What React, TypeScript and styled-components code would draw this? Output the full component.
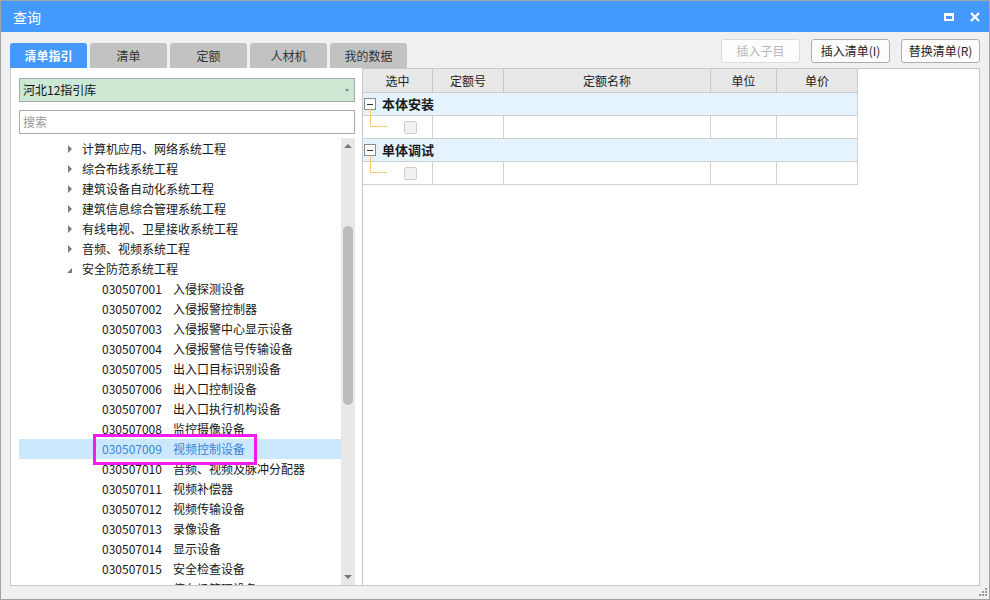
import React from "react";
import styled, { createGlobalStyle, css } from "styled-components";

const Global = createGlobalStyle`
  html, body { margin: 0; padding: 0; background: #ffffff; }
  * { box-sizing: border-box; }
`;

const FONT = `"Noto Sans CJK SC", "Noto Sans", sans-serif`;

const Window = styled.div`
  width: 990px;
  height: 600px;
  border: 1px solid #a2a2a2;
  background: #f0f0f0;
  display: flex;
  flex-direction: column;
  font-family: ${FONT};
  overflow: hidden;
`;

const TitleBar = styled.div`
  height: 31px;
  flex: none;
  background: #4499ff;
  color: #fff;
  display: flex;
  align-items: center;
  padding: 0 9px 0 12px;
  font-size: 14px;
  line-height: 20px;
`;

const Title = styled.div`
  flex: 1;
`;

const TitleIcons = styled.div`
  display: flex;
  align-items: center;
  gap: 16px;
`;

const Toolbar = styled.div`
  height: 36px;
  flex: none;
  display: flex;
  align-items: flex-end;
  padding: 0 9px;
`;

const Tabs = styled.div`
  display: flex;
  gap: 3px;
`;

const Tab = styled.div<{ $active?: boolean }>`
  width: 77px;
  height: 25px;
  border-radius: 3px 3px 0 0;
  display: flex;
  align-items: center;
  justify-content: center;
  font-size: 12px;
  line-height: 16px;
  background: ${(p) => (p.$active ? "#4499ff" : "#c2c2c2")};
  color: ${(p) => (p.$active ? "#ffffff" : "#333333")};
  font-weight: ${(p) => (p.$active ? 700 : 400)};
`;

const Buttons = styled.div`
  margin-left: auto;
  align-self: flex-start;
  margin-top: 7px;
  display: flex;
  gap: 11px;
`;

const Button = styled.div<{ $disabled?: boolean }>`
  width: 79px;
  height: 24px;
  border-radius: 3px;
  display: flex;
  align-items: center;
  justify-content: center;
  font-size: 12px;
  line-height: 16px;
  background: #fdfdfd;
  border: 1px solid ${(p) => (p.$disabled ? "#dcdcdc" : "#adadad")};
  color: ${(p) => (p.$disabled ? "#b8b8b8" : "#222222")};
`;

const Main = styled.div`
  height: 518px;
  flex: none;
  display: flex;
  padding: 0 9px;
`;

const LeftPanel = styled.div`
  width: 352px;
  flex: none;
  background: #fff;
  border-left: 1px solid #c8c8c8;
  border-bottom: 1px solid #c8c8c8;
  padding: 10px 7px 0 8px;
  display: flex;
  flex-direction: column;
`;

const fieldBase = css`
  height: 24px;
  flex: none;
  border: 1px solid #aaaaaa;
  display: flex;
  align-items: center;
  padding: 0 3px;
  font-size: 12px;
  line-height: 16px;
`;

const Select = styled.div`
  ${fieldBase};
  background: #cde8d2;
  color: #111;
  justify-content: space-between;
  padding-right: 5px;
`;

const SelectArrow = styled.span`
  width: 0;
  height: 0;
  border-left: 2.5px solid transparent;
  border-right: 2.5px solid transparent;
  border-top: 3px solid #888;
`;

const Search = styled.div`
  ${fieldBase};
  margin-top: 8px;
  background: #fff;
  color: #9a9a9a;
`;

const Tree = styled.div`
  margin-top: 4px;
  flex: 1;
  display: flex;
  min-height: 0;
`;

const TreeList = styled.div`
  flex: 1;
  overflow: hidden;
  padding-top: 1px;
`;

const Row = styled.div<{ $selected?: boolean; $level: number }>`
  height: 20px;
  display: flex;
  align-items: center;
  white-space: nowrap;
  font-size: 12px;
  line-height: 20px;
  color: ${(p) => (p.$selected ? "#3a84d6" : "#161616")};
  background: ${(p) => (p.$selected ? "#cce8ff" : "transparent")};
  padding-left: ${(p) => (p.$level === 1 ? 48 : 83)}px;
  position: ${(p) => (p.$selected ? "relative" : "static")};
`;

const Expander = styled.span`
  width: 15px;
  height: 20px;
  flex: none;
  display: flex;
  align-items: center;
`;

const ArrowRight = styled.span`
  width: 0;
  height: 0;
  border-top: 4px solid transparent;
  border-bottom: 4px solid transparent;
  border-left: 4px solid #7a7a7a;
  margin-left: 1px;
`;

const ArrowOpen = styled.span`
  width: 0;
  height: 0;
  border-left: 5px solid transparent;
  border-bottom: 5px solid #7a7a7a;
  margin-top: 2px;
`;

const Code = styled.span`
  width: 71px;
  flex: none;
`;

const Highlight = styled.span`
  position: absolute;
  left: 74px;
  top: -5px;
  width: 164px;
  height: 31px;
  border: 3px solid #f21cf2;
  z-index: 2;
  pointer-events: none;
`;

const Scrollbar = styled.div`
  width: 14px;
  flex: none;
  background: #e8e8e8;
  display: flex;
  flex-direction: column;
  align-items: center;
`;

const ScrollBtn = styled.div`
  height: 16px;
  flex: none;
  display: flex;
  align-items: center;
  justify-content: center;
`;

const UpTri = styled.span`
  width: 0;
  height: 0;
  border-left: 4px solid transparent;
  border-right: 4px solid transparent;
  border-bottom: 4px solid #777;
`;

const DownTri = styled.span`
  width: 0;
  height: 0;
  border-left: 4px solid transparent;
  border-right: 4px solid transparent;
  border-top: 4px solid #777;
`;

const Track = styled.div`
  flex: 1;
  width: 100%;
  position: relative;
`;

const Thumb = styled.div`
  position: absolute;
  left: 2px;
  width: 10px;
  border-radius: 5px;
  background: #bcbcbc;
`;

const RightPanel = styled.div`
  flex: 1;
  background: #fff;
  border: 1px solid #c8c8c8;
`;

const Grid = styled.div`
  display: grid;
  grid-template-columns: 70px 71px 207px 66px 81px;
  width: 495px;
`;

const HeadCell = styled.div`
  height: 24px;
  background: #e8e8e8;
  border-right: 1px solid #c8c8c8;
  border-bottom: 1px solid #c8c8c8;
  display: flex;
  align-items: center;
  justify-content: center;
  font-size: 12px;
  line-height: 16px;
  color: #222;
`;

const GroupRow = styled.div`
  grid-column: 1 / -1;
  height: 23px;
  background: #e5f3ff;
  border-right: 1px solid #d0d0d0;
  border-bottom: 1px solid #d0d0d0;
  display: flex;
  align-items: center;
  padding-left: 1px;
  font-size: 13px;
  line-height: 16px;
  font-weight: 700;
  color: #1a1a1a;
`;

const Collapse = styled.span`
  width: 12px;
  height: 12px;
  border: 1px solid #8a8a8a;
  background: #fff;
  display: flex;
  align-items: center;
  justify-content: center;
  margin-right: 6px;
  &::after {
    content: "";
    width: 6px;
    height: 1px;
    background: #333;
  }
`;

const Cell = styled.div<{ $tree?: boolean }>`
  height: 23px;
  border-right: 1px solid #d0d0d0;
  border-bottom: 1px solid #d0d0d0;
  position: relative;
  display: flex;
  align-items: center;
  padding-left: ${(p) => (p.$tree ? 41 : 0)}px;
  ${(p) =>
    p.$tree &&
    css`
      &::before {
        content: "";
        position: absolute;
        left: 7px;
        top: -7px;
        width: 16px;
        height: 17px;
        border-left: 1px solid #ffc874;
        border-bottom: 1px solid #ffc874;
      }
    `}
`;

const Check = styled.span`
  width: 13px;
  height: 13px;
  border: 1px solid #cdcdcd;
  border-radius: 2px;
  background: #f1f1f1;
`;

const Footer = styled.div`
  flex: 1;
  display: flex;
  justify-content: flex-end;
  align-items: flex-end;
  padding: 0 1px 1px 0;
`;

const level1 = [
  "计算机应用、网络系统工程",
  "综合布线系统工程",
  "建筑设备自动化系统工程",
  "建筑信息综合管理系统工程",
  "有线电视、卫星接收系统工程",
  "音频、视频系统工程",
];

const children: [string, string][] = [
  ["030507001", "入侵探测设备"],
  ["030507002", "入侵报警控制器"],
  ["030507003", "入侵报警中心显示设备"],
  ["030507004", "入侵报警信号传输设备"],
  ["030507005", "出入口目标识别设备"],
  ["030507006", "出入口控制设备"],
  ["030507007", "出入口执行机构设备"],
  ["030507008", "监控摄像设备"],
  ["030507009", "视频控制设备"],
  ["030507010", "音频、视频及脉冲分配器"],
  ["030507011", "视频补偿器"],
  ["030507012", "视频传输设备"],
  ["030507013", "录像设备"],
  ["030507014", "显示设备"],
  ["030507015", "安全检查设备"],
  ["030507016", "停车场管理设备"],
];

const selectedCode = "030507009";
const headers = ["选中", "定额号", "定额名称", "单位", "单价"];
const groups = ["本体安装", "单体调试"];

const scroll = { top: 72, height: 179 };

export default function App() {
  return (
    <>
      <Global />
      <Window>
        <TitleBar>
          <Title>查询</Title>
          <TitleIcons>
            <svg width="10" height="8" viewBox="0 0 10 8">
              <rect x="1" y="1.25" width="8" height="5.75" fill="none" stroke="#fff" strokeWidth="2" />
              <rect x="0" y="0" width="10" height="3" fill="#fff" />
            </svg>
            <svg width="10" height="10" viewBox="0 0 10 10">
              <path d="M1 1 L9 9 M9 1 L1 9" stroke="#fff" strokeWidth="2.2" />
            </svg>
          </TitleIcons>
        </TitleBar>
        <Toolbar>
          <Tabs>
            <Tab $active>清单指引</Tab>
            <Tab>清单</Tab>
            <Tab>定额</Tab>
            <Tab>人材机</Tab>
            <Tab>我的数据</Tab>
          </Tabs>
          <Buttons>
            <Button $disabled>插入子目</Button>
            <Button>插入清单(I)</Button>
            <Button>替换清单(R)</Button>
          </Buttons>
        </Toolbar>
        <Main>
          <LeftPanel>
            <Select>
              <span>河北12指引库</span>
              <SelectArrow />
            </Select>
            <Search>搜索</Search>
            <Tree>
              <TreeList>
                {level1.map((t) => (
                  <Row key={t} $level={1}>
                    <Expander>
                      <ArrowRight />
                    </Expander>
                    {t}
                  </Row>
                ))}
                <Row $level={1}>
                  <Expander>
                    <ArrowOpen />
                  </Expander>
                  安全防范系统工程
                </Row>
                {children.map(([c, n]) => (
                  <Row key={c} $level={2} $selected={c === selectedCode}>
                    <Code>{c}</Code>
                    {n}
                    {c === selectedCode && <Highlight />}
                  </Row>
                ))}
              </TreeList>
              <Scrollbar>
                <ScrollBtn>
                  <UpTri />
                </ScrollBtn>
                <Track>
                  <Thumb style={{ top: scroll.top, height: scroll.height }} />
                </Track>
                <ScrollBtn>
                  <DownTri />
                </ScrollBtn>
              </Scrollbar>
            </Tree>
          </LeftPanel>
          <RightPanel>
            <Grid>
              {headers.map((h) => (
                <HeadCell key={h}>{h}</HeadCell>
              ))}
              {groups.map((g) => (
                <React.Fragment key={g}>
                  <GroupRow>
                    <Collapse />
                    {g}
                  </GroupRow>
                  <Cell $tree>
                    <Check />
                  </Cell>
                  <Cell />
                  <Cell />
                  <Cell />
                  <Cell />
                </React.Fragment>
              ))}
            </Grid>
          </RightPanel>
        </Main>
        <Footer>
          <svg width="11" height="10" viewBox="0 0 11 10">
            <g fill="#9a9a9a">
              <rect x="8" y="0" width="2" height="2" />
              <rect x="5" y="3" width="2" height="2" />
              <rect x="8" y="3" width="2" height="2" />
              <rect x="2" y="6" width="2" height="2" />
              <rect x="5" y="6" width="2" height="2" />
              <rect x="8" y="6" width="2" height="2" />
            </g>
          </svg>
        </Footer>
      </Window>
    </>
  );
}
